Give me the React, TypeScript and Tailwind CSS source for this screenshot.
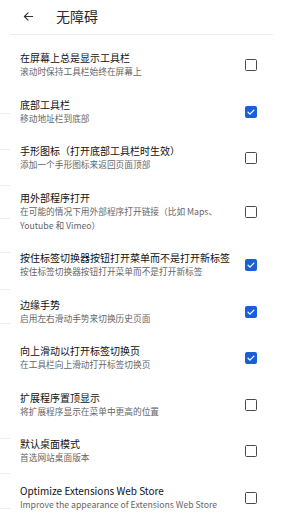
import React from "react";

type Row = { title: string; sub: string; checked: boolean };

const rows: Row[] = [
  { title: "在屏幕上总是显示工具栏", sub: "滚动时保持工具栏始终在屏幕上", checked: false },
  { title: "底部工具栏", sub: "移动地址栏到底部", checked: true },
  { title: "手形图标（打开底部工具栏时生效）", sub: "添加一个手形图标来返回页面顶部", checked: false },
  {
    title: "用外部程序打开",
    sub: "在可能的情况下用外部程序打开链接（比如 Maps、Youtube 和 Vimeo）",
    checked: false,
  },
  {
    title: "按住标签切换器按钮打开菜单而不是打开新标签",
    sub: "按住标签切换器按钮打开菜单而不是打开新标签",
    checked: true,
  },
  { title: "边缘手势", sub: "启用左右滑动手势来切换历史页面", checked: true },
  { title: "向上滑动以打开标签切换页", sub: "在工具栏向上滑动打开标签切换页", checked: true },
  { title: "扩展程序置顶显示", sub: "将扩展程序显示在菜单中更高的位置", checked: false },
  { title: "默认桌面模式", sub: "首选网站桌面版本", checked: false },
  {
    title: "Optimize Extensions Web Store",
    sub: "Improve the appearance of Extensions Web Store",
    checked: false,
  },
];

// faint left-edge ticks seen in the screenshot
const ticks = [113, 149, 185, 218, 252, 289, 323, 438, 473, 508];

function Checkbox({ checked }: { checked: boolean }) {
  if (checked) {
    return (
      <div className="flex h-[12px] w-[12px] items-center justify-center rounded-[2px] bg-[#1a5fd6]">
        <svg width="10" height="10" viewBox="0 0 24 24" fill="none">
          <path d="M5 12.5l4.5 4.5L19 7.5" stroke="#fff" strokeWidth="3" strokeLinecap="round" strokeLinejoin="round" />
        </svg>
      </div>
    );
  }
  return <div className="h-[12px] w-[12px] rounded-[1.5px] border-[1.5px] border-[#4a4a4a]" />;
}

export default function App() {
  return (
    <div
      className="relative h-[528px] w-[283px] overflow-hidden bg-white"
      style={{ fontFamily: '"Noto Sans CJK SC", "Noto Sans", sans-serif' }}
    >
      {ticks.map((y) => (
        <div key={y} className="absolute left-0 h-px w-[10px] bg-[#ececec]" style={{ top: y }} />
      ))}

      <div className="flex h-[34px] items-center pl-[23px]">
        <svg width="11" height="11" viewBox="0 0 24 24" fill="none" className="mt-[-2px]">
          <path d="M21 12H4M11 4l-8 8 8 8" stroke="#333" strokeWidth="2.4" strokeLinecap="round" strokeLinejoin="round" />
        </svg>
        <span className="ml-[22px] mt-[-3px] text-[14px] leading-[20px] text-[#2b2b2b]">无障碍</span>
      </div>
      <div className="mx-[10px] h-px bg-[#ececec]" />

      <div className="flex flex-col pt-[7px]">
        {rows.map((r) => (
          <div key={r.title} className="flex items-center py-[9.25px] pl-[20px] pr-[26px]">
            <div className="flex min-w-0 flex-1 flex-col pr-[10px]">
              <div className="text-[10px] leading-[14px] font-normal text-[#111]">{r.title}</div>
              <div className="text-[8.7px] leading-[14px] text-[#666]">{r.sub}</div>
            </div>
            <Checkbox checked={r.checked} />
          </div>
        ))}
      </div>
    </div>
  );
}
